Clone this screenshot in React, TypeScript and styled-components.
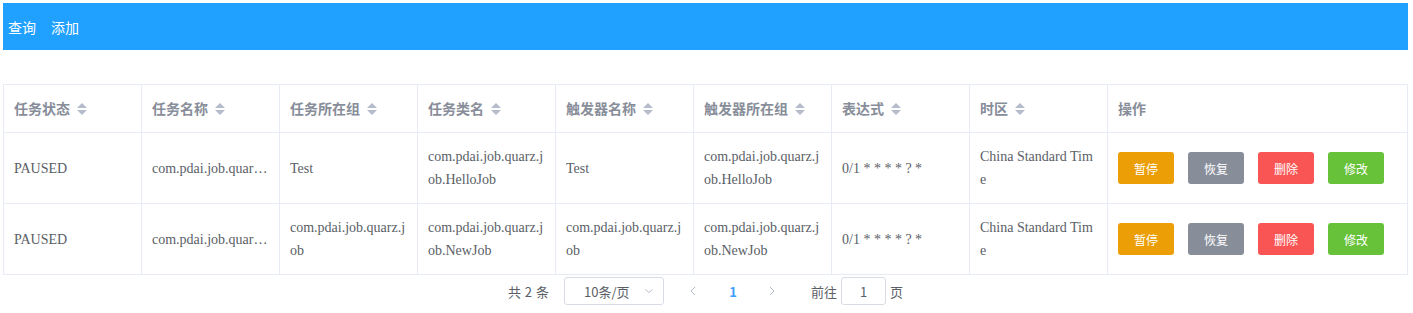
import styled, { createGlobalStyle } from "styled-components";

const GlobalStyle = createGlobalStyle`
  html, body {
    margin: 0;
    padding: 0;
    background: #fff;
  }
  #root {
    padding: 3px 5px 0 3px;
  }
`;

const colors = {
  warning: "#eb9e05",
  info: "#878d99",
  danger: "#fa5555",
  success: "#67c23a",
};

const TopBar = styled.div`
  display: flex;
  align-items: center;
  gap: 15px;
  height: 47px;
  padding-left: 5px;
  background: #20a0ff;
  color: #fff;
  font-family: "Noto Sans CJK SC", sans-serif;
  font-size: 14px;
`;

const BarItem = styled.span`
  cursor: pointer;
`;

const Table = styled.table`
  width: 100%;
  margin-top: 34px;
  border-collapse: collapse;
  table-layout: fixed;
  border: 1px solid #e6ebf5;
  font-family: "Liberation Serif", "Noto Sans CJK SC", serif;
  font-size: 14px;
  color: #5a5e66;
`;

const Th = styled.th`
  padding: 12px 10px;
  text-align: left;
  border: 1px solid #e6ebf5;
  color: #878d99;
  font-family: "Noto Sans CJK SC", sans-serif;
  font-weight: 700;
  line-height: 23px;
  white-space: nowrap;
`;

const Td = styled.td<{ $ellipsis?: boolean }>`
  padding: 12px 10px;
  border: 1px solid #e6ebf5;
  line-height: 23px;
  word-break: break-all;
  vertical-align: middle;
  ${({ $ellipsis }) =>
    $ellipsis &&
    `
    white-space: nowrap;
    overflow: hidden;
    text-overflow: ellipsis;
  `}
`;

const SortCaret = styled.span`
  display: inline-flex;
  flex-direction: column;
  vertical-align: middle;
  margin-left: 7px;
  gap: 2px;
  position: relative;
  top: -1px;

  &::before,
  &::after {
    content: "";
    width: 0;
    height: 0;
    border-left: 5px solid transparent;
    border-right: 5px solid transparent;
  }
  &::before {
    border-bottom: 5px solid #b4bccc;
  }
  &::after {
    border-top: 5px solid #b4bccc;
  }
`;

const Actions = styled.div`
  display: flex;
  gap: 14px;
`;

const Button = styled.button<{ $kind: keyof typeof colors }>`
  width: 56px;
  height: 32px;
  border: none;
  border-radius: 3px;
  background: ${({ $kind }) => colors[$kind]};
  color: #fff;
  font-family: "Noto Sans CJK SC", sans-serif;
  font-size: 12px;
  cursor: pointer;
`;

const Pager = styled.div`
  display: flex;
  justify-content: center;
  align-items: center;
  padding-top: 2px;
  height: 28px;
  font-family: "Noto Sans CJK SC", sans-serif;
  font-size: 13px;
  color: #5a5e66;
`;

const Total = styled.span`
  margin-right: 15px;
  word-spacing: 1px;
`;

const SizeSelect = styled.div`
  box-sizing: border-box;
  width: 100px;
  height: 28px;
  border: 1px solid #d8dce5;
  border-radius: 3px;
  display: flex;
  align-items: center;
  justify-content: space-between;
  padding: 0 8px 0 19px;
  margin-right: 11px;
  color: #5a5e66;

  svg {
    color: #b4bccc;
  }
`;

const Arrow = styled.span`
  display: inline-flex;
  width: 38px;
  justify-content: center;
  color: #b4bccc;
`;

const PageNum = styled.span`
  width: 40px;
  text-align: center;
  color: #409eff;
  font-weight: 700;
`;

const Jumper = styled.span`
  display: flex;
  align-items: center;
  margin-left: 20px;
  gap: 4px;
`;

const JumpInput = styled.div`
  box-sizing: border-box;
  width: 45px;
  height: 28px;
  border: 1px solid #d8dce5;
  border-radius: 3px;
  display: flex;
  align-items: center;
  justify-content: center;
`;

const Chevron = ({ dir }: { dir: "left" | "right" | "down" }) => {
  const d =
    dir === "left"
      ? "M7 2 L3 6 L7 10"
      : dir === "right"
        ? "M4 2 L8 6 L4 10"
        : "M2.5 4.5 L6 7.5 L9.5 4.5";
  return (
    <svg width="12" height="12" viewBox="0 0 12 12">
      <path d={d} fill="none" stroke="currentColor" strokeWidth="1" />
    </svg>
  );
};

type Job = {
  state: string;
  name: string;
  group: string;
  className: string;
  trigger: string;
  triggerGroup: string;
  cron: string;
  zone: string;
};

const jobs: Job[] = [
  {
    state: "PAUSED",
    name: "com.pdai.job.quarz.job.HelloJob",
    group: "Test",
    className: "com.pdai.job.quarz.job.HelloJob",
    trigger: "Test",
    triggerGroup: "com.pdai.job.quarz.job.HelloJob",
    cron: "0/1 * * * * ? *",
    zone: "China Standard Time",
  },
  {
    state: "PAUSED",
    name: "com.pdai.job.quarz.job.NewJob",
    group: "com.pdai.job.quarz.job",
    className: "com.pdai.job.quarz.job.NewJob",
    trigger: "com.pdai.job.quarz.job",
    triggerGroup: "com.pdai.job.quarz.job.NewJob",
    cron: "0/1 * * * * ? *",
    zone: "China Standard Time",
  },
];

const headers = [
  "任务状态",
  "任务名称",
  "任务所在组",
  "任务类名",
  "触发器名称",
  "触发器所在组",
  "表达式",
  "时区",
];

export default function App() {
  return (
    <>
      <GlobalStyle />
      <TopBar>
        <BarItem>查询</BarItem>
        <BarItem>添加</BarItem>
      </TopBar>
      <Table>
        <colgroup>
          {headers.map((h) => (
            <col key={h} style={{ width: 138 }} />
          ))}
          <col />
        </colgroup>
        <thead>
          <tr>
            {headers.map((h) => (
              <Th key={h}>
                {h}
                <SortCaret />
              </Th>
            ))}
            <Th>操作</Th>
          </tr>
        </thead>
        <tbody>
          {jobs.map((job, i) => (
            <tr key={i}>
              <Td $ellipsis>{job.state}</Td>
              <Td $ellipsis>{job.name}</Td>
              <Td>{job.group}</Td>
              <Td>{job.className}</Td>
              <Td>{job.trigger}</Td>
              <Td>{job.triggerGroup}</Td>
              <Td>{job.cron}</Td>
              <Td>{job.zone}</Td>
              <Td>
                <Actions>
                  <Button $kind="warning">暂停</Button>
                  <Button $kind="info">恢复</Button>
                  <Button $kind="danger">删除</Button>
                  <Button $kind="success">修改</Button>
                </Actions>
              </Td>
            </tr>
          ))}
        </tbody>
      </Table>
      <Pager>
        <Total>共 2 条</Total>
        <SizeSelect>
          <span>10条/页</span>
          <Chevron dir="down" />
        </SizeSelect>
        <Arrow>
          <Chevron dir="left" />
        </Arrow>
        <PageNum>1</PageNum>
        <Arrow>
          <Chevron dir="right" />
        </Arrow>
        <Jumper>
          前往
          <JumpInput>1</JumpInput>
          页
        </Jumper>
      </Pager>
    </>
  );
}
